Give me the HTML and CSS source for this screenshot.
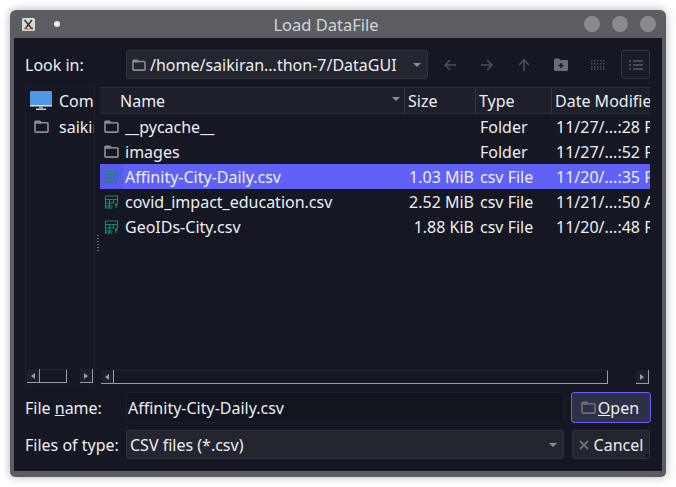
FILE: index.html
```html
<!DOCTYPE html>
<html lang="en">
<head>
    <meta charset="UTF-8">
    <meta name="viewport" content="width=device-width, initial-scale=1.0">
    <title>Load DataFile</title>
    <link rel="stylesheet" href="styles.css">
</head>
<body>
    <svg class="defs" width="0" height="0">
        <symbol id="folder" viewBox="0 0 16 14">
            <path d="M1 2.5a1 1 0 0 1 1-1h4l1.5 1.5H14a1 1 0 0 1 1 1v8a1 1 0 0 1-1 1H2a1 1 0 0 1-1-1z" fill="none" stroke="currentColor" stroke-width="1.8"/>
            <path d="M1 2h5l2 2H1z" fill="currentColor"/>
        </symbol>
        <symbol id="csv" viewBox="0 0 14 14">
            <path d="M1 1h12v7.5M1 1v12h7M1 4.5h12M1 8h9M1 11h7M5 4.5V13M9 4.5V8" fill="none" stroke="currentColor" stroke-width="1.2"/>
            <path d="M10 8.5h3.500l-.7 2.200-.8.2V13.500l-1.100-.8v-1.800z" fill="currentColor"/>
        </symbol>
    </svg>

    <div class="window">
        <div class="titlebar">
            <svg class="app-icon" width="13" height="13" viewBox="0 0 13 13">
                <rect width="13" height="13" rx="1.5" fill="#d9d9d9"/>
                <path d="M2.5 2 L10.5 11.5 M10 2 L3 11" stroke="#33343a" stroke-width="1.5"/>
                <path d="M2 10.5 Q6 12.5 11 9.5" stroke="#c8693a" stroke-width="1" fill="none"/>
            </svg>
            <span class="pin"></span>
            <span class="title">Load DataFile</span>
            <span class="win-btn"></span>
            <span class="win-btn"></span>
            <span class="win-btn"></span>
        </div>

        <div class="content">
            <div class="toolbar">
                <span class="label look-label">Look in:</span>
                <div class="combo path-combo">
                    <svg class="combo-icon" width="14" height="12"><use href="#folder"/></svg>
                    <span class="combo-text">/home/saikiran...thon-7/DataGUI</span>
                    <span class="arrow"></span>
                </div>
                <div class="tools">
                    <svg class="tool" width="14" height="14" viewBox="0 0 14 14"><path d="M13 7H2M7 2 2 7l5 5" fill="none" stroke="currentColor" stroke-width="1.6"/></svg>
                    <svg class="tool" width="14" height="14" viewBox="0 0 14 14"><path d="M1 7h11M7 2l5 5-5 5" fill="none" stroke="currentColor" stroke-width="1.6"/></svg>
                    <svg class="tool" width="14" height="14" viewBox="0 0 14 14"><path d="M7 13V2M2 7l5-5 5 5" fill="none" stroke="currentColor" stroke-width="1.6"/></svg>
                    <svg class="tool tool-new" width="14" height="13" viewBox="0 0 14 13"><path d="M0 1.500A1 1 0 0 1 1 .5h4L6.500 2H13a1 1 0 0 1 1 1v9a1 1 0 0 1-1 1H1a1 1 0 0 1-1-1z" fill="currentColor"/><path d="M7 5v5M4.500 7.500h5" stroke="#151823" stroke-width="1.600"/></svg>
                    <svg class="tool-grid" width="14" height="10" viewBox="0 0 14 10"><path d="M0 .75h14M0 3.750h14M0 6.750h14M0 9.250h14" stroke="currentColor" stroke-dasharray="1.500 1.500" stroke-width="1.500"/></svg>
                    <div class="view-btn">
                        <svg width="14" height="10" viewBox="0 0 14 10"><path d="M0 1h2M4 1h10M0 5h2M4 5h10M0 9h2M4 9h10" stroke="currentColor" stroke-width="1.600"/></svg>
                    </div>
                </div>
            </div>

            <div class="panes">
                <div class="sidebar">
                    <div class="side-list">
                        <div class="side-item">
                            <svg class="side-icon" width="22" height="19" viewBox="0 0 22 19">
                                <rect width="22" height="14" rx="1" fill="#4f97e8"/>
                                <rect y="14" width="22" height="1.500" fill="#dfe2e6"/>
                                <rect x="9" y="15" width="4" height="2.500" fill="#9a9da3"/>
                                <rect x="6" y="17.500" width="10" height="1.500" fill="#c9ccd1"/>
                            </svg>
                            <span>Computer</span>
                        </div>
                        <div class="side-item">
                            <svg class="side-folder" width="15" height="13"><use href="#folder"/></svg>
                            <span>saikiran</span>
                        </div>
                    </div>
                    <div class="scrollbar side-scroll">
                        <span class="sb-btn sb-left"></span>
                        <span class="sb-thumb"></span>
                        <span class="sb-gap"></span>
                        <span class="sb-btn sb-right"></span>
                    </div>
                </div>

                <div class="splitter"><span class="grip"></span></div>

                <div class="files">
                    <div class="header">
                        <div class="col col-name">Name<span class="sort"></span></div>
                        <div class="col col-size">Size</div>
                        <div class="col col-type">Type</div>
                        <div class="col col-date">Date Modified</div>
                    </div>
                    <div class="rows">
                        <div class="row">
                            <div class="cell col-name"><svg class="file-icon folder" width="15" height="13"><use href="#folder"/></svg>__pycache__</div>
                            <div class="cell col-size"></div>
                            <div class="cell col-type">Folder</div>
                            <div class="cell col-date">11/27/...:28 PM</div>
                        </div>
                        <div class="row">
                            <div class="cell col-name"><svg class="file-icon folder" width="15" height="13"><use href="#folder"/></svg>images</div>
                            <div class="cell col-size"></div>
                            <div class="cell col-type">Folder</div>
                            <div class="cell col-date">11/27/...:52 PM</div>
                        </div>
                        <div class="row selected">
                            <div class="cell col-name"><svg class="file-icon csv" width="15" height="14"><use href="#csv"/></svg>Affinity-City-Daily.csv</div>
                            <div class="cell col-size">1.03 MiB</div>
                            <div class="cell col-type">csv File</div>
                            <div class="cell col-date">11/20/...:35 PM</div>
                        </div>
                        <div class="row">
                            <div class="cell col-name"><svg class="file-icon csv" width="15" height="14"><use href="#csv"/></svg>covid_impact_education.csv</div>
                            <div class="cell col-size">2.52 MiB</div>
                            <div class="cell col-type">csv File</div>
                            <div class="cell col-date">11/21/...:50 AM</div>
                        </div>
                        <div class="row">
                            <div class="cell col-name"><svg class="file-icon csv" width="15" height="14"><use href="#csv"/></svg>GeoIDs-City.csv</div>
                            <div class="cell col-size">1.88 KiB</div>
                            <div class="cell col-type">csv File</div>
                            <div class="cell col-date">11/20/...:48 PM</div>
                        </div>
                    </div>
                    <div class="scrollbar main-scroll">
                        <span class="sb-btn sb-left"></span>
                        <span class="sb-thumb"></span>
                        <span class="sb-gap"></span>
                        <span class="sb-btn sb-right"></span>
                    </div>
                </div>
            </div>

            <div class="form-row name-row">
                <span class="label form-label">File <u>n</u>ame:</span>
                <div class="name-input">Affinity-City-Daily.csv</div>
                <div class="button open-btn">
                    <svg class="btn-folder" width="15" height="13"><use href="#folder"/></svg>
                    <span><u>O</u>pen</span>
                </div>
            </div>
            <div class="form-row type-row">
                <span class="label form-label">Files of type:</span>
                <div class="combo type-combo">
                    <span class="combo-text">CSV files (*.csv)</span>
                    <span class="arrow"></span>
                </div>
                <div class="button cancel-btn">
                    <svg class="btn-x" width="10" height="10" viewBox="0 0 10 10"><path d="M1 1l8 8M9 1 1 9" stroke="currentColor" stroke-width="1.800"/></svg>
                    <span>Cancel</span>
                </div>
            </div>
        </div>
    </div>
</body>
</html>
```

FILE: styles.css
```css
* {
    box-sizing: border-box;
}

body {
    margin: 0;
    height: 487px;
    padding: 10px;
    background-color: #fff;
    font-family: "Noto Sans", sans-serif;
    font-size: 16px;
    color: #eceef2;
    overflow: hidden;
}

.defs {
    display: block;
    height: 0;
}

.window {
    height: 467px;
    background: #5c5d62;
    border-radius: 6px 6px 5px 5px;
    box-shadow: 0 0 10px rgba(0, 0, 0, 0.3);
    padding: 0 4px 6px;
    display: flex;
    flex-direction: column;
}

.titlebar {
    height: 28px;
    flex: none;
    display: flex;
    align-items: center;
    padding-left: 8px;
    padding-right: 6px;
    gap: 12px;
    color: #d0d5dc;
}

.pin {
    width: 6px;
    height: 6px;
    margin-left: 7px;
    border-radius: 50%;
    background: #e8e8e8;
}

.title {
    flex: 1;
    text-align: center;
    font-size: 16.5px;
    margin-left: 8px;
}

.win-btn {
    width: 16px;
    height: 16px;
    border-radius: 50%;
    background: #8a8b8f;
}

.content {
    flex: 1;
    background: #151823;
    padding: 12px 12px 0 11px;
    display: flex;
    flex-direction: column;
}

.toolbar {
    display: flex;
    align-items: center;
    height: 29px;
}

.label {
    flex: none;
}

.look-label,
.form-label {
    width: 101px;
}

.combo {
    display: flex;
    align-items: center;
    height: 29px;
    background: #23262f;
    border: 1px solid #33363f;
    border-radius: 3px;
    padding: 0 6px 0 5px;
    flex: none;
}

.path-combo {
    width: 302px;
}

.combo-icon {
    color: #8b8d92;
    margin-right: 4px;
    flex: none;
}

.combo-text {
    flex: 1;
    white-space: nowrap;
    overflow: hidden;
}

.arrow {
    width: 0;
    height: 0;
    border-left: 4px solid transparent;
    border-right: 4px solid transparent;
    border-top: 4px solid #8b8d92;
    flex: none;
}

.tools {
    display: flex;
    align-items: center;
    margin-left: 15px;
    color: #4d4f56;
    flex: 1;
}

.tool {
    flex: none;
    margin-right: 23px;
}

.tool-new {
    color: #6a6c72;
}

.tool-grid {
    flex: none;
}

.view-btn {
    width: 29px;
    height: 29px;
    margin-left: auto;
    border: 1px solid #33363f;
    border-radius: 3px;
    background: #1a1d28;
    display: flex;
    align-items: center;
    justify-content: center;
    color: #5a5c63;
}

.panes {
    display: flex;
    height: 298px;
    margin-top: 8px;
}

.sidebar {
    width: 70px;
    flex: none;
    border: 1px solid #1c1f2a;
    display: flex;
    flex-direction: column;
    overflow: hidden;
}

.side-list {
    flex: 1;
    display: flex;
    flex-direction: column;
    gap: 1px;
}

.side-item {
    display: flex;
    align-items: center;
    height: 25px;
    white-space: nowrap;
}

.side-icon {
    margin-left: 4px;
    margin-right: 7px;
    flex: none;
}

.side-folder {
    margin-left: 8px;
    margin-right: 10px;
    flex: none;
    color: #8b8d92;
}

.splitter {
    width: 5px;
    flex: none;
    display: flex;
    align-items: center;
    justify-content: center;
}

.grip {
    width: 2px;
    height: 18px;
    margin-top: 16px;
    background: repeating-linear-gradient(#6a6c72 0 1px, transparent 1px 3px);
}

.files {
    flex: 1;
    min-width: 0;
    display: flex;
    flex-direction: column;
    overflow: hidden;
}

.header {
    display: flex;
    height: 27px;
    flex: none;
    background: #1d202b;
    border-top: 1px solid #2a2d37;
    border-bottom: 1px solid #2a2d37;
}

.col {
    display: flex;
    align-items: center;
    border-right: 1px solid #33363f;
    padding-left: 3px;
    position: relative;
    white-space: nowrap;
}

.col-name {
    width: 305px;
    flex: none;
}

.header .col-name {
    padding-left: 20px;
}

.col-size {
    width: 71px;
    flex: none;
}

.col-type {
    width: 76px;
    flex: none;
}

.col-date {
    flex: none;
    width: 140px;
    border-right: none;
}

.sort {
    position: absolute;
    right: 4px;
    top: 9px;
    border-left: 4px solid transparent;
    border-right: 4px solid transparent;
    border-top: 4px solid #8b8d92;
}

.rows {
    flex: 1;
}

.row {
    display: flex;
    height: 25px;
    align-items: center;
}

.row.selected {
    background: linear-gradient(to right, #5a5bec 23px, #6061f6 23px);
}

.cell {
    white-space: nowrap;
    padding-left: 4px;
    height: 25px;
    display: flex;
    align-items: center;
}

.cell.col-size {
    justify-content: flex-end;
    padding-right: 2px;
}

.file-icon {
    margin-right: 6px;
    flex: none;
}

.file-icon.folder {
    color: #8b8d92;
}

.file-icon.csv {
    color: #12896a;
}

.scrollbar {
    display: flex;
    height: 14px;
    flex: none;
    padding: 0 1px;
    margin-bottom: 1px;
}

.sb-btn {
    width: 13px;
    flex: none;
    display: flex;
    align-items: center;
    justify-content: center;
    background: #1d202b;
    border-right: 1px solid #9a9ca1;
    border-bottom: 1px solid #9a9ca1;
}

.sb-btn::before {
    content: "";
    border-top: 3px solid transparent;
    border-bottom: 3px solid transparent;
}

.sb-left::before {
    border-right: 4px solid #9a9ca1;
}

.sb-right::before {
    border-left: 4px solid #9a9ca1;
}

.sb-thumb {
    background: #151823;
    border-top: 1px solid #24262f;
    border-right: 1px solid #9a9ca1;
    border-bottom: 1px solid #9a9ca1;
}

.sb-gap {
    flex: 1;
}

.side-scroll .sb-thumb {
    width: 27px;
}

.main-scroll .sb-thumb {
    width: 494px;
}

.form-row {
    display: flex;
    align-items: center;
}

.name-row {
    height: 31px;
    margin-top: 7px;
}

.type-row {
    height: 29px;
    margin-top: 7px;
}

.name-input {
    width: 438px;
    height: 31px;
    flex: none;
    display: flex;
    align-items: center;
    padding-left: 1px;
    background: #12141e;
    border: 1px solid #1c1f2a;
    border-radius: 3px;
}

.type-combo {
    width: 438px;
    padding: 0 6px 0 3px;
}

.button {
    display: flex;
    align-items: center;
    justify-content: center;
    flex: none;
    border-radius: 3px;
    background: #23262f;
    border: 1px solid #33363f;
    position: relative;
}

.open-btn {
    width: 80px;
    height: 31px;
    margin-left: 7px;
    padding-right: 2px;
    background: #2e3047;
    border-color: #5f60f5;
}

.btn-folder {
    color: #6e7076;
    margin-right: 2px;
}

.cancel-btn {
    width: 78px;
    height: 29px;
    margin-left: 8px;
    overflow: hidden;
}

.btn-x {
    color: #6e7076;
    margin-right: 5px;
    flex: none;
}

.cancel-btn::after {
    content: "";
    position: absolute;
    right: -1px;
    bottom: -1px;
    width: 5px;
    height: 5px;
    background: #151823;
}
```
